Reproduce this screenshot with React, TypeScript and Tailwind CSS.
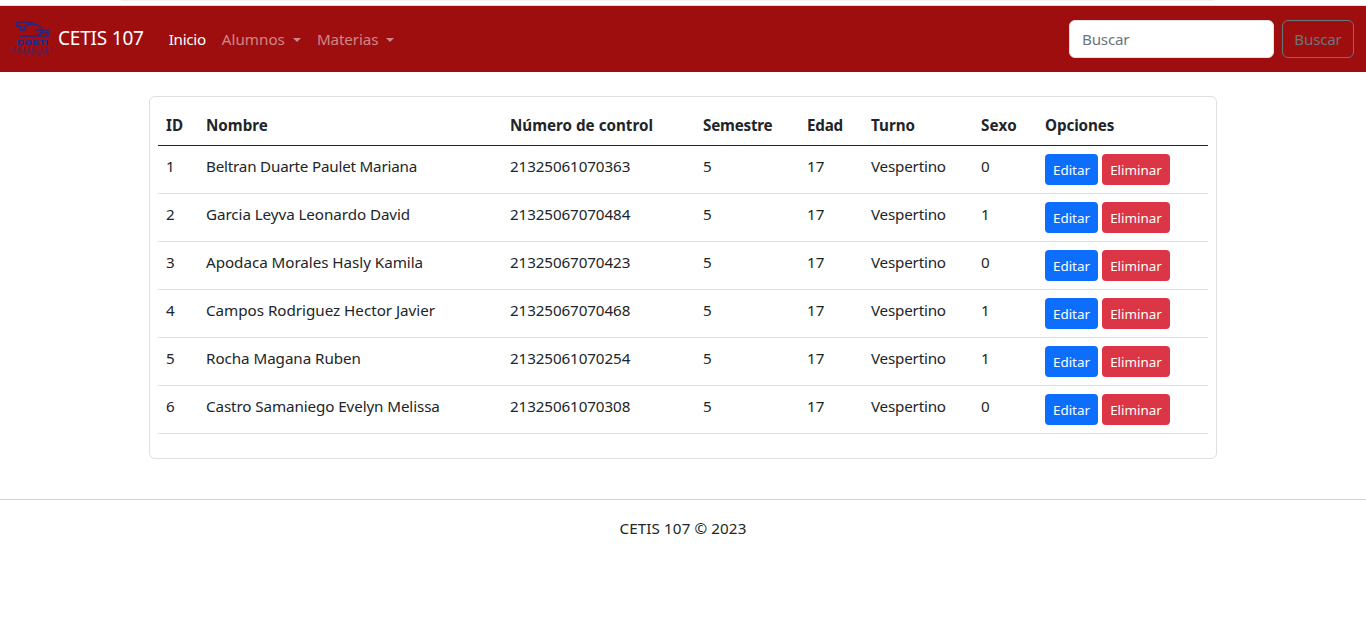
const rows = [
  { id: "1", name: "Beltran Duarte Paulet Mariana", control: "21325061070363", sexo: "0", track: "tracking-[-0.2px]" },
  { id: "2", name: "Garcia Leyva Leonardo David", control: "21325067070484", sexo: "1", track: "tracking-[-0.07px]" },
  { id: "3", name: "Apodaca Morales Hasly Kamila", control: "21325067070423", sexo: "0", track: "tracking-[-0.04px]" },
  { id: "4", name: "Campos Rodriguez Hector Javier", control: "21325067070468", sexo: "1", track: "tracking-[-0.02px]" },
  { id: "5", name: "Rocha Magana Ruben", control: "21325061070254", sexo: "1", track: "tracking-[-0.06px]" },
  { id: "6", name: "Castro Samaniego Evelyn Melissa", control: "21325061070308", sexo: "0", track: "tracking-[-0.1px]" },
];

function Logo() {
  return (
    <svg width="42" height="38" viewBox="0 0 42 38" className="shrink-0">
      <g fill="none" stroke="#1a2a90" strokeWidth="1.7">
        <path d="M5 2H21M5 2V6H11M8 6V10H14" />
        <path d="M8 16H22c6 0 8-3 8-6s-4-6-10-6c-4 0-7 2-8 5" />
        <path d="M23 10H36V16H27M30 13H36" />
      </g>
      <text x="5" y="25" textLength="31" lengthAdjust="spacingAndGlyphs" fontSize="8" fontWeight="700" fill="#1a2a90" fontFamily="Liberation Sans, sans-serif">DGETI</text>
      <text x="0" y="30.5" textLength="40" fontSize="4.5" fontWeight="700" fill="#2a2a90" fontFamily="Liberation Sans, sans-serif">CETIS 107</text>
      <path d="M5 32H36" stroke="#2a2a90" strokeWidth="0.7" />
      <text x="11" y="36" textLength="27" fontSize="3.2" fill="#3a2a80" fontFamily="Liberation Sans, sans-serif">Culiacan, Sin.</text>
    </svg>
  );
}

function Caret() {
  return <span className="ml-[8px] inline-block h-0 w-0 border-x-[4.8px] border-t-[4.8px] border-x-transparent border-t-current align-[2.5px]" />;
}

export default function App() {
  return (
    <div className="min-h-[630px] bg-white text-[15.2px] text-[#212529] [font-family:'Noto_Sans',sans-serif]">
      <div className="h-[6px] border-b border-[#dcdcdc]">
        <div className="ml-[121px] h-[1px] w-[1092px] bg-[#f0f0f0]" />
      </div>
      <nav className="flex h-[66px] items-center bg-[#9e0e0e] pl-3 pr-3">
        <div className="flex items-center text-white">
          <Logo />
          <span className="ml-[4px] -translate-y-[1px] text-[19px] tracking-[-0.2px]">CETIS 107</span>
        </div>
        <div className="ml-[25px] flex items-center gap-4">
          <span className="tracking-[-0.3px] text-white">Inicio</span>
          <span className="text-white/50">Alumnos<Caret /></span>
          <span className="tracking-[-0.1px] text-white/50">Materias<Caret /></span>
        </div>
        <div className="ml-auto flex items-center gap-2">
          <div className="flex h-[38px] w-[205px] items-center rounded-[6px] border border-[#dee2e6] bg-white px-3 tracking-[-0.2px] text-[#6c757d]">Buscar</div>
          <div className="flex h-[38px] w-[72px] items-center justify-center rounded-[6px] border border-[#6c757d] tracking-[-0.2px] text-[#6c757d]">Buscar</div>
        </div>
      </nav>

      <main className="mx-auto mt-6 h-[363px] w-[1068px] rounded-[6px] border border-[#dfdfdf] px-2 pt-2">
        <table className="w-[1050px] table-fixed border-collapse text-left">
          <thead>
            <tr className="h-[40px] border-b border-[#212529]">
              <th className="w-[40px] pl-2 pt-[2px] font-bold">ID</th>
              <th className="w-[304px] pl-2 pt-[2px] font-bold">Nombre</th>
              <th className="w-[193px] pl-2 pt-[2px] font-bold">Número de control</th>
              <th className="w-[104px] pl-2 pt-[2px] font-bold tracking-[-0.2px]">Semestre</th>
              <th className="w-[64px] pl-2 pt-[2px] font-bold tracking-[-0.2px]">Edad</th>
              <th className="w-[110px] pl-2 pt-[2px] font-bold">Turno</th>
              <th className="w-[64px] pl-2 pt-[2px] font-bold tracking-[0.2px]">Sexo</th>
              <th className="pl-2 pt-[2px] font-bold tracking-[-0.1px]">Opciones</th>
            </tr>
          </thead>
          <tbody>
            {rows.map((r) => (
              <tr key={r.id} className="h-[48px] border-b border-[#dee2e6]">
                <td className="pb-[6px] pl-2">{r.id}</td>
                <td className={`pb-[6px] pl-2 ${r.track}`}>{r.name}</td>
                <td className="pb-[6px] pl-2 tracking-[-0.1px]">{r.control}</td>
                <td className="pb-[6px] pl-2">5</td>
                <td className="pb-[6px] pl-2">17</td>
                <td className="pb-[6px] pl-2 tracking-[-0.2px]">Vespertino</td>
                <td className="pb-[6px] pl-2">{r.sexo}</td>
                <td className="pl-2">
                  <div className="flex gap-1 text-[13.4px] text-white">
                    <span className="flex h-[31px] w-[53px] items-center justify-center rounded-[4px] bg-[#0d6efd] pt-[2px]">Editar</span>
                    <span className="flex h-[31px] w-[68px] items-center justify-center rounded-[4px] bg-[#dc3545] pt-[2px]">Eliminar</span>
                  </div>
                </td>
              </tr>
            ))}
          </tbody>
        </table>
      </main>

      <footer className="mt-10 border-t border-[#d4d4d4] pt-[17px] text-center tracking-[0.1px]">CETIS 107 © 2023</footer>
    </div>
  );
}
